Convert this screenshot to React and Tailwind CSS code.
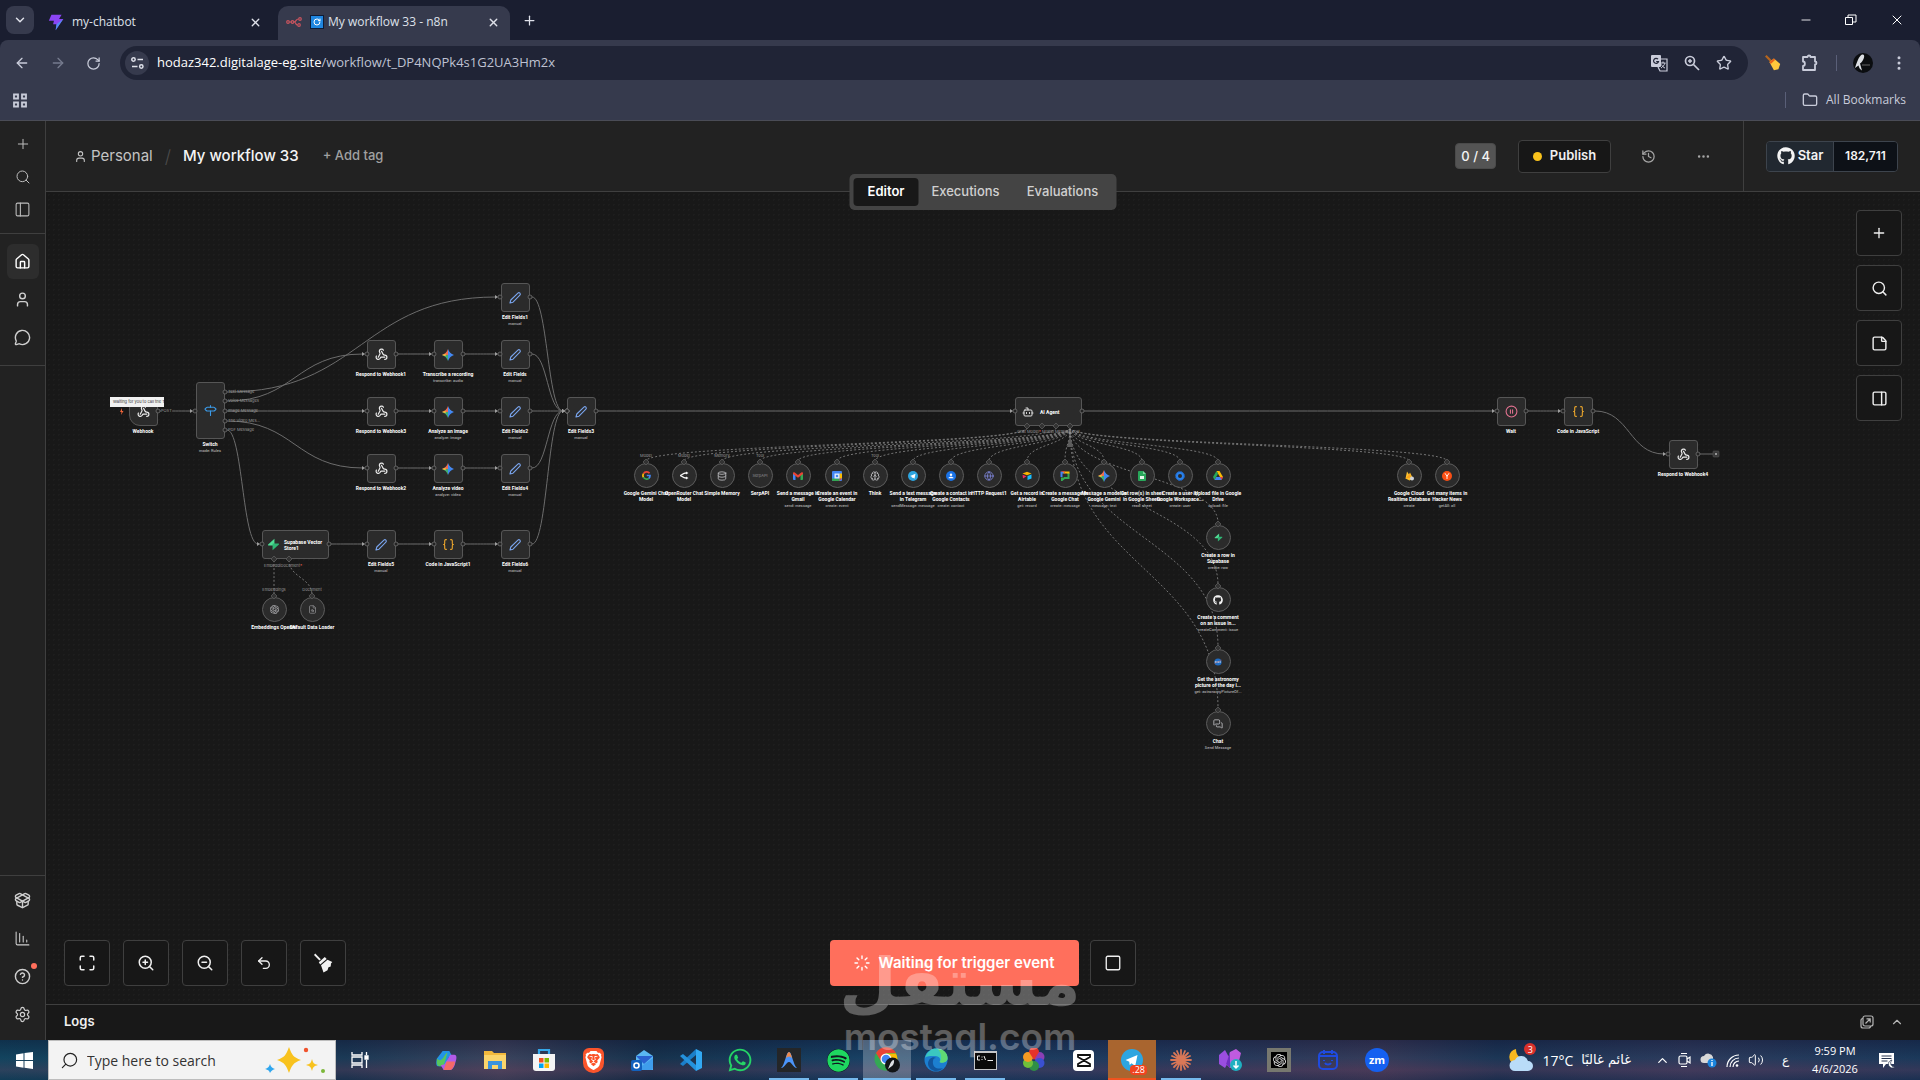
import React from 'react';
import {
  ArrowLeft, ArrowRight, RotateCw, ChevronDown, ChevronUp, X, Plus, Minus, Search, PanelLeft, PanelRight, House, User,
  MessageCircle, PackageOpen, Settings, Maximize, ZoomIn, ZoomOut, Undo2, History, Ellipsis,
  StickyNote, Square, Webhook, Signpost, Braces, CirclePause, Bot, Globe, Star, Folder, EllipsisVertical,
  ChartColumnDecreasing, CircleQuestionMark, Volume2, FileSearch, Brain, MessagesSquare, Database,
} from 'lucide-react';
import { FaSpotify, FaWhatsapp, FaGithub } from 'react-icons/fa';
import { SiBrave, SiOpenai } from 'react-icons/si';

/* ---------- drawn icons ---------- */

const PenIcon = () => (
  <svg width="14" height="14" viewBox="0 0 14 14" fill="none" stroke="#7aa5ee" strokeWidth="1.100" strokeLinejoin="round">
    <path d="M2 12l.8-3L9.900 2.100a1.300 1.300 0 0 1 2 2L5 11.200z" />
  </svg>
);

const GeminiIcon = () => (
  <svg width="14" height="14" viewBox="0 0 14 14">
    <path d="M7 1Q8.500 5.500 13 7H7z" fill="#4a8bf5" />
    <path d="M13 7Q8.500 8.500 7 13V7z" fill="#3f86f0" />
    <path d="M7 13Q5.500 8.500 1 7h6z" fill="#3fae74" />
    <path d="M1 7Q5.500 5.500 7 1v6z" fill="#ee6c50" />
    <path d="M1 7l3.200-1.200L5 7l-.8 1.200z" fill="#f5b93a" />
    <path d="M7 3.500L9.800 7 7 10z" fill="#3d8af0" />
  </svg>
);

const SupabaseIcon = ({ size = 14 }) => (
  <svg width={size} height={size} viewBox="0 0 14 14">
    <path d="M8 .8v7.400H1.800c-.7 0-1-.7-.6-1.200z" fill="#4fdc94" />
    <path d="M6 13.200V5.800h6.200c.7 0 1 .7.6 1.200z" fill="#2fb574" />
  </svg>
);

const GoogleIcon = () => (
  <svg width="9" height="9" viewBox="0 0 18 18" fill="none" strokeWidth="3.400">
    <path d="M15 4.500A7.300 7.300 0 0 0 3 5.200" stroke="#ea4335" />
    <path d="M3 5.200a7.300 7.300 0 0 0 0 7.600" stroke="#fbbc05" />
    <path d="M3 12.800a7.300 7.300 0 0 0 10.600 1.800" stroke="#34a853" />
    <path d="M13.600 14.600A7 7 0 0 0 16 9H9.500" stroke="#4285f4" />
  </svg>
);

const OpenRouterIcon = () => (
  <svg width="9" height="9" viewBox="0 0 18 18" fill="none" stroke="#f4f4f4" strokeWidth="2.800">
    <path d="M0 9c4 0 5-5 12-5M0 9c4 0 5 5 12 5" />
    <path d="M12 1l5 3-5 3zM12 11l5 3-5 3z" fill="#f4f4f4" stroke="none" />
  </svg>
);

const GmailIcon = () => (
  <svg width="10" height="8" viewBox="0 0 20 16">
    <path d="M0 2v12c0 1 1 2 2 2h3V6z" fill="#4285f4" />
    <path d="M20 2v12c0 1-1 2-2 2h-3V6z" fill="#34a853" />
    <path d="M0 2.500C0 .5 2 0 3.500 1L10 6l6.500-5C18 0 20 .5 20 2.500V4l-10 7.500L0 4z" fill="#ea4335" />
  </svg>
);

const CalendarIcon = () => (
  <svg width="10" height="10" viewBox="0 0 20 20">
    <rect width="20" height="20" rx="2" fill="#4285f4" />
    <path d="M15 5h5v10h-5z" fill="#fbbc04" />
    <path d="M0 15h15v5H2a2 2 0 0 1-2-2z" fill="#34a853" />
    <path d="M15 15h5l-5 5z" fill="#ea4335" />
    <path d="M5 5h10v10H5z" fill="#dceafd" />
    <circle cx="10" cy="10" r="2.500" fill="#4285f4" />
  </svg>
);

const TelegramDot = ({ size = 10 }) => (
  <svg width={size} height={size} viewBox="0 0 24 24">
    <circle cx="12" cy="12" r="12" fill="#2da5e0" />
    <path d="M5 12l13-5.500-2.500 12-4-3-2 2-.500-3.500z" fill="#fff" />
  </svg>
);

const ContactsIcon = () => (
  <svg width="10" height="10" viewBox="0 0 20 20">
    <circle cx="10" cy="10" r="10" fill="#1a73e8" />
    <circle cx="10" cy="7.500" r="2.500" fill="#fff" />
    <path d="M5 14.500c0-4 10-4 10 0z" fill="#fff" />
  </svg>
);

const AirtableIcon = () => (
  <svg width="10" height="10" viewBox="0 0 20 20">
    <path d="M1 5l9-3.500L19 5l-9 3.500z" fill="#fcb400" />
    <path d="M11 10l8-3v8l-8 3z" fill="#18bfff" />
    <path d="M1 7.500l8 3L2 15z" fill="#f82b60" />
  </svg>
);

const GChatIcon = () => (
  <svg width="10" height="10" viewBox="0 0 20 20" fill="none" strokeWidth="4">
    <path d="M3 12V3h5" stroke="#4285f4" />
    <path d="M7 3h10v3" stroke="#fbbc04" />
    <path d="M17 5v9H9l-5 4v-5" stroke="#34a853" />
    <path d="M3 1h6v4" stroke="#ea4335" strokeWidth="1.500" />
  </svg>
);

const SheetsIcon = () => (
  <svg width="8" height="10" viewBox="0 0 16 20">
    <path d="M0 2C0 1 1 0 2 0h8l6 6v12c0 1-1 2-2 2H2c-1 0-2-1-2-2z" fill="#28a75a" />
    <path d="M4 10h8v6H4z" fill="#e7f6ec" />
    <path d="M10 0v6h6z" fill="#7ed3a0" />
  </svg>
);

const WorkspaceIcon = () => (
  <svg width="10" height="10" viewBox="0 0 20 20" fill="none">
    <circle cx="10" cy="10" r="6.500" stroke="#2b82ea" strokeWidth="5" />
    <circle cx="10" cy="10" r="8.500" stroke="#1a66d0" strokeWidth="2" strokeDasharray="4 2.700" />
  </svg>
);

const DriveIcon = () => (
  <svg width="10" height="9" viewBox="0 0 20 18">
    <path d="M7 0h6l7 12h-6z" fill="#fbbc04" />
    <path d="M7 0l3 5.500L3 18l-3-6z" fill="#28a75a" />
    <path d="M6.500 12H20l-3 6H3z" fill="#4285f4" />
    <path d="M14 12h6l-3 6z" fill="#ea4335" />
  </svg>
);

const FirebaseIcon = () => (
  <svg width="9" height="10" viewBox="0 0 18 20">
    <path d="M1 15L4 1l4 6 2-4 6 12-7 4z" fill="#fbc02d" />
    <path d="M1 15L10 5l2 8z" fill="#f9a01b" />
    <circle cx="14" cy="15" r="4" fill="#cfd3da" />
  </svg>
);

const HackerNewsIcon = () => (
  <svg width="10" height="10" viewBox="0 0 20 20">
    <circle cx="10" cy="10" r="10" fill="#fb4f14" />
    <path d="M6 4.500l4 6 4-6M10 10v6" stroke="#fff" strokeWidth="1.800" fill="none" />
  </svg>
);

const NasaIcon = () => (
  <svg width="8" height="8" viewBox="0 0 20 20">
    <circle cx="10" cy="10" r="9" fill="#1f6dc4" />
    <path d="M2 10h16" stroke="#fff" strokeWidth="2.500" strokeDasharray="3 1" />
    <path d="M1 14L19 5" stroke="#e05b4b" strokeWidth="1" />
  </svg>
);

const Broom = ({ size = 20 }) => (
  <svg width={size} height={size} viewBox="0 0 20 20" fill="#f2f2f2">
    <path d="M2.200.6l5.600 5.600-1.400 1.400L1 2z" />
    <path d="M5.800 9.200l6-5.200 1.900 1.900-6.500 5.500z" />
    <path d="M8 12.200l6.500-5.500 4.800 2.200-1.300 1.500-.3 3-2.200.8-1 3-4 2.300z" />
  </svg>
);

const N8nLogo = () => (
  <svg width="16" height="10" viewBox="0 0 32 20" fill="none" stroke="#c9545e" strokeWidth="2.400">
    <circle cx="4" cy="10" r="2.600" /><circle cx="13" cy="10" r="2.600" />
    <circle cx="28" cy="4" r="2.600" /><circle cx="26" cy="16" r="2.600" />
    <path d="M7 10h3M16 10c5 0 3-6 9-6M16 10c5 0 2 6 7 6" />
  </svg>
);

const PopOutIcon = () => (
  <svg width="14" height="14" viewBox="0 0 14 14" fill="none" stroke="#b5b5b5" strokeWidth="1.200">
    <rect x="3" y="1" width="10" height="10" rx="2" />
    <path d="M3 3.500c-1.500 0-2 1-2 2V11c0 1.200.8 2 2 2h5.500c1.200 0 2-.8 2-2" />
    <path d="M5.500 8.500L10 4M6.500 3.800h3.700v3.700" />
  </svg>
);

/* ---------- workflow data ---------- */

const VIEW = { x: -46, y: -192 };

const webhook = <Webhook size={13} color="#ececec" strokeWidth={2.200} />;
const braces = <Braces size={13} color="#f0a92c" strokeWidth={2} />;

const boxes = [
  { x: 515, y: 297, icon: <PenIcon />, title: 'Edit Fields1', sub: 'manual' },
  { x: 381, y: 354, icon: webhook, title: 'Respond to Webhook1' },
  { x: 448, y: 354, icon: <GeminiIcon />, title: 'Transcribe a recording', sub: 'transcribe: audio' },
  { x: 515, y: 354, icon: <PenIcon />, title: 'Edit Fields', sub: 'manual' },
  { x: 381, y: 411, icon: webhook, title: 'Respond to Webhook3' },
  { x: 448, y: 411, icon: <GeminiIcon />, title: 'Analyze an image', sub: 'analyze: image' },
  { x: 515, y: 411, icon: <PenIcon />, title: 'Edit Fields2', sub: 'manual' },
  { x: 581, y: 411, icon: <PenIcon />, title: 'Edit Fields3', sub: 'manual' },
  { x: 381, y: 468, icon: webhook, title: 'Respond to Webhook2' },
  { x: 448, y: 468, icon: <GeminiIcon />, title: 'Analyze video', sub: 'analyze: video' },
  { x: 515, y: 468, icon: <PenIcon />, title: 'Edit Fields4', sub: 'manual' },
  { x: 381, y: 544, icon: <PenIcon />, title: 'Edit Fields5', sub: 'manual' },
  { x: 448, y: 544, icon: braces, title: 'Code in JavaScript1' },
  { x: 515, y: 544, icon: <PenIcon />, title: 'Edit Fields6', sub: 'manual' },
  { x: 1511, y: 411, icon: <CirclePause size={13} color="#e0718f" strokeWidth={2} />, title: 'Wait' },
  { x: 1578, y: 411, icon: braces, title: 'Code in JavaScript' },
  { x: 1683, y: 454, icon: webhook, title: 'Respond to Webhook4' },
];

const grey = { color: '#c0c0c4', strokeWidth: 2 };

const circles = [
  { x: 646, icon: <GoogleIcon />, title: ['Google Gemini Chat', 'Model'], top: 'Model' },
  { x: 684, icon: <OpenRouterIcon />, title: ['OpenRouter Chat', 'Model'], top: 'Model' },
  { x: 722, icon: <Database size={10} {...grey} />, title: ['Simple Memory'], top: 'Memory' },
  { x: 760, icon: <span className="text-[4px] leading-none text-[#8d8d90]">SerpAPI</span>, title: ['SerpAPI'], top: 'Tool' },
  { x: 798, icon: <GmailIcon />, title: ['Send a message in', 'Gmail'], sub: 'send: message' },
  { x: 837, icon: <CalendarIcon />, title: ['Create an event in', 'Google Calendar'], sub: 'create: event' },
  { x: 875, icon: <Brain size={10} {...grey} />, title: ['Think'], top: 'Tool' },
  { x: 913, icon: <TelegramDot />, title: ['Send a text message', 'in Telegram'], sub: 'sendMessage: message' },
  { x: 951, icon: <ContactsIcon />, title: ['Create a contact in', 'Google Contacts'], sub: 'create: contact' },
  { x: 989, icon: <Globe size={10} color="#7e86d8" strokeWidth={2} />, title: ['HTTP Request1'] },
  { x: 1027, icon: <AirtableIcon />, title: ['Get a record in', 'Airtable'], sub: 'get: record' },
  { x: 1065, icon: <GChatIcon />, title: ['Create a message in', 'Google Chat'], sub: 'create: message' },
  { x: 1104, icon: <GeminiIcon />, title: ['Message a model in', 'Google Gemini'], sub: 'message: text' },
  { x: 1142, icon: <SheetsIcon />, title: ['Get row(s) in sheet', 'in Google Sheets'], sub: 'read: sheet' },
  { x: 1180, icon: <WorkspaceIcon />, title: ['Create a user in', 'Google Workspace...'], sub: 'create: user' },
  { x: 1218, icon: <DriveIcon />, title: ['Upload file in Google', 'Drive'], sub: 'upload: file' },
  { x: 1409, icon: <FirebaseIcon />, title: ['Google Cloud', 'Realtime Database'], sub: 'create' },
  { x: 1447, icon: <HackerNewsIcon />, title: ['Get many items in', 'Hacker News'], sub: 'getAll: all' },
].map((n) => ({ ...n, y: 475 })).concat([
  { x: 1218, y: 537, icon: <SupabaseIcon size={9} />, title: ['Create a row in', 'Supabase'], sub: 'create: row' },
  { x: 1218, y: 599, icon: <FaGithub size={10} color="#f4f4f4" />, title: ['Create a comment', 'on an issue in...'], sub: 'createComment: issue' },
  { x: 1218, y: 661, icon: <NasaIcon />, title: ['Get the astronomy', 'picture of the day i...'], sub: 'get: astronomyPictureOf...' },
  { x: 1218, y: 723, icon: <MessagesSquare size={10} {...grey} />, title: ['Chat'], sub: 'Send Message' },
  { x: 274, y: 609, icon: <SiOpenai size={9} color="#c0c0c4" />, title: ['Embeddings OpenAI'], top: 'Embeddings' },
  { x: 312, y: 609, icon: <FileSearch size={9} color="#8d8d90" />, title: ['Default Data Loader'], top: 'Document' },
]);

const mainEdges = [
  [158, 411, 195, 411],
  [225, 392, 500, 297], [225, 401, 367, 354], [225, 411, 367, 411], [225, 421, 367, 468], [225, 430, 262, 544],
  [396, 354, 434, 354], [463, 354, 500, 354], [396, 411, 434, 411], [463, 411, 500, 411],
  [396, 468, 434, 468], [463, 468, 500, 468], [329, 544, 367, 544], [396, 544, 434, 544], [463, 544, 500, 544],
  [530, 297, 567, 411], [530, 354, 567, 411], [530, 411, 567, 411], [530, 468, 567, 411], [530, 544, 567, 411],
  [596, 411, 1015, 411], [1082, 411, 1497, 411], [1526, 411, 1563, 411], [1593, 411, 1668, 454],
];

const agentPort = (i) => [1027, 1027, 1056][i] || 1070;
const subEdges = circles.slice(0, 22).map((n, i) => [agentPort(i), 428, n.x, n.y - 14])
  .concat([[274, 560, 274, 595], [289, 560, 312, 595]]);

const outLabels = [
  [392, 'Text Message'], [401, 'Voice Messages'], [411, 'Image Message'], [421, 'The Video Mes...'], [430, 'PDF Message'],
];

const hPath = ([a, b, c, d]) => {
  const s = a + 2;
  const e = c - 4;
  const m = (s + e) / 2;
  return `M${s} ${b}C${m} ${b} ${m} ${d} ${e} ${d}`;
};
const vPath = ([a, b, c, d]) => {
  const m = (b + d) / 2;
  return `M${a} ${b}C${a} ${m} ${c} ${m} ${c} ${d}`;
};

/* ---------- canvas ---------- */

function BoxNode({ n }) {
  return (
    <div className="absolute flex w-[120px] -translate-x-1/2 flex-col items-center" style={{ left: n.x, top: n.y - 14 }}>
      <div className="grid size-[29px] place-items-center rounded-[3px] border border-[#565656] bg-[#2b2b2b]">{n.icon}</div>
      <NodeText title={[n.title]} sub={n.sub} />
    </div>
  );
}

function NodeText({ title, sub }) {
  return (
    <div className="mt-0.5 text-center font-['Roboto',sans-serif] whitespace-nowrap">
      {title.map((t) => <p key={t} className="text-[5px] leading-[6px] font-bold text-white">{t}</p>)}
      {sub && <p className="text-[4px] leading-[7px] font-medium text-[#a8a8a8]">{sub}</p>}
    </div>
  );
}

function CircleNode({ n }) {
  return (
    <div className="absolute flex w-[80px] -translate-x-1/2 flex-col items-center" style={{ left: n.x, top: n.y - 12 }}>
      {n.top && <span className="absolute -top-[10px] text-[4px] leading-[5px] text-[#999]">{n.top}</span>}
      <div className="grid size-[25px] place-items-center rounded-full border border-[#5c5c5c] bg-[#2b2b2b]">{n.icon}</div>
      <NodeText title={n.title} sub={n.sub} />
    </div>
  );
}

const Diamond = ({ x, y }) => <path d={`M${x} ${y - 3}l3 3-3 3-3-3z`} fill="#333" stroke="#5c5c5c" strokeWidth=".8" />;

function Workflow() {
  return (
    <div className="absolute top-0 left-0" style={{ transform: `translate(${VIEW.x}px, ${VIEW.y}px)` }}>
      <svg className="absolute overflow-visible" width="1" height="1" fill="none" aria-hidden="true">
        {mainEdges.map((e) => <path key={e.join()} d={hPath(e)} stroke="#6c6c6c" strokeWidth="1" />)}
        {subEdges.map((e, i) => <path key={i} d={vPath(e)} stroke="#747474" strokeWidth="1" strokeDasharray="2 2" />)}
        <path d="M1070 436l3 11h-6z" fill="#5d5d5d" />
        <path d="M1070 425v12" stroke="#a0a0a0" />
        <path d="M1698 454h16" stroke="#686868" />
      </svg>
      {circles.map((n) => <CircleNode key={n.title[0]} n={n} />)}
      {boxes.map((n) => <BoxNode key={n.title} n={n} />)}

      <div className="absolute flex w-[60px] -translate-x-1/2 flex-col items-center" style={{ left: 143, top: 397 }}>
        <div className="grid size-[29px] place-items-center rounded-[3px] rounded-l-[11px] border border-[#565656] bg-[#2b2b2b]">{webhook}</div>
        <NodeText title={['Webhook']} />
      </div>
      <div className="absolute flex h-[10px] w-[54px] items-center overflow-hidden bg-[#f1f1f1] pl-[3px] text-[4px] leading-none whitespace-nowrap text-[#333]" style={{ left: 110, top: 397 }}>
        Waiting for you to call the Test URL
      </div>

      <div className="absolute flex w-[60px] -translate-x-1/2 flex-col items-center" style={{ left: 210, top: 382 }}>
        <div className="grid h-[57px] w-[29px] place-items-center rounded-[3px] border border-[#565656] bg-[#2b2b2b]">
          <Signpost size={13} color="#3b9ae8" />
        </div>
        <NodeText title={['Switch']} sub="mode: Rules" />
      </div>
      {outLabels.map(([y, t]) => (
        <span key={t} className="absolute text-[4px] leading-[4px] whitespace-nowrap text-[#999]" style={{ left: 228, top: y - 2 }}>{t}</span>
      ))}
      <span className="absolute bg-[#181818] text-[4px] leading-[4px] text-[#999]" style={{ left: 161, top: 409 }}>POST</span>

      <div className="absolute flex h-[29px] w-[67px] items-center gap-1 rounded-[3px] border border-[#565656] bg-[#2b2b2b] pl-1" style={{ left: 262, top: 530 }}>
        <SupabaseIcon size={13} />
        <p className="font-['Roboto',sans-serif] text-[5px] leading-[6px] font-bold text-white">Supabase Vector<br />Store1</p>
      </div>
      <span className="absolute text-[4px] leading-[5px] text-[#999]" style={{ left: 264, top: 563 }}>EmbeddiDocument<b className="text-[#e0604f]">*</b></span>

      <div className="absolute flex h-[29px] w-[67px] items-center gap-1.5 rounded-[3px] border border-[#565656] bg-[#2b2b2b] pl-1.5" style={{ left: 1015, top: 397 }}>
        <Bot size={12} color="#e4e4e4" />
        <p className="font-['Roboto',sans-serif] text-[5px] leading-[6px] font-bold text-white">AI Agent</p>
      </div>
      <span className="absolute text-[4px] leading-[5px] whitespace-nowrap text-[#999]" style={{ left: 1017, top: 429 }}>Chat Model<b className="text-[#e0604f]">*</b> Model Memory Tool</span>

      <svg className="absolute overflow-visible" width="1" height="1" aria-hidden="true">
        {mainEdges.map(([a, b, c, d]) => (
          <g key={[a, b, c, d].join()}>
            <circle cx={a} cy={b} r="2" fill="#222" stroke="#707070" strokeWidth=".8" />
            <circle cx={c} cy={d} r="2" fill="#222" stroke="#707070" strokeWidth=".8" />
            <path d={`M${c - 5} ${d - 2}l3 2-3 2z`} fill="#a0a0a0" />
          </g>
        ))}
        <circle cx="1698" cy="454" r="2" fill="#222" stroke="#707070" strokeWidth=".8" />
        <rect x="1713" y="451" width="6" height="6" rx="1" fill="#3a3a3a" stroke="#555" strokeWidth=".6" />
        <path d="M1715 454h2M1716 453v2" stroke="#ccc" strokeWidth=".8" />
        {[1027, 1042, 1056, 1070].map((x) => <Diamond key={x} x={x} y={426} />)}
        {[274, 289].map((x) => <Diamond key={x} x={x} y={559} />)}
        {circles.map((n) => <Diamond key={n.title[0]} x={n.x} y={n.y - 13} />)}
        <path d="M122 408l-2 4h1.500l-.5 3 2.500-4h-1.500z" fill="#f0653a" />
      </svg>
    </div>
  );
}

/* ---------- browser frame ---------- */

function TabStrip() {
  return (
    <div className="flex h-10 shrink-0 items-end bg-[#1a1e30] pl-1.5 text-[#dfe1ea]">
      <button aria-label="Search tabs" className="mb-1.5 grid h-7 w-7 place-items-center rounded-lg bg-[#363a4d]"><ChevronDown size={14} strokeWidth={2.500} /></button>
      <div className="flex h-[34px] w-[244px] items-center gap-[7px] pr-4 pl-[14px] pb-0.5 text-[12px]">
        <svg width="17" height="17" viewBox="0 0 20 20" aria-hidden="true">
          <path d="M4 1h12l-3 5h5L9 19l1-7H6l1-4H1z" fill="#8b45f5" />
          <path d="M18 6L9 19l1-7z" fill="#3fa9f5" opacity=".7" />
        </svg>
        <span className="flex-1">my-chatbot</span>
        <button aria-label="Close my-chatbot"><X size={13} strokeWidth={2.500} /></button>
      </div>
      <div className="flex h-[34px] w-[232px] items-center gap-2 rounded-t-[10px] bg-[#363a4d] pr-2.5 pb-0.5 pl-2 text-[12px]">
        <N8nLogo />
        <span className="flex flex-1 items-center gap-1 whitespace-nowrap">
          <span className="grid size-[14px] place-items-center border border-[#0e1c38] bg-[#1f86e0]"><RotateCw size={8} color="#fff" strokeWidth={3} /></span>
          My workflow 33 - n8n
        </span>
        <button aria-label="Close My workflow 33"><X size={13} strokeWidth={2.500} /></button>
      </div>
      <button aria-label="New tab" className="mb-3 ml-3"><Plus size={15} /></button>
      <div className="ml-auto flex h-10 items-center gap-8 pr-[15px] text-white">
        <button aria-label="Minimize"><Minus size={14} strokeWidth={1.500} /></button>
        <button aria-label="Restore" className="grid place-items-center">
          <svg width="12" height="12" viewBox="0 0 12 12" fill="none" stroke="#fff"><path d="M.5 3.500h7v7h-7zM3 3V1h8v7H8" /></svg>
        </button>
        <button aria-label="Close window"><X size={16} strokeWidth={1.500} /></button>
      </div>
    </div>
  );
}

function Toolbar() {
  return (
    <div className="shrink-0 bg-[#1a1e30]">
      <div className="flex h-[81px] flex-col rounded-t-lg border-b border-[#4a4c56] bg-[#363a4d] text-[#c9ccda]">
        <div className="flex items-center pt-1.5 pr-3">
          <div className="flex w-[120px] items-center gap-5 pl-[14px]">
            <button aria-label="Back"><ArrowLeft size={16} /></button>
            <button aria-label="Forward" className="text-[#767b8e]"><ArrowRight size={16} /></button>
            <button aria-label="Reload"><RotateCw size={15} /></button>
          </div>
          <div className="flex h-[34px] flex-1 items-center gap-2 rounded-full bg-[#202436] pr-4 pl-[5px]">
            <button aria-label="Site information" className="grid size-6 place-items-center rounded-full bg-[#363a4d]">
              <svg width="13" height="12" viewBox="0 0 13 12" fill="none" stroke="#dfe1ea" strokeWidth="1.500"><circle cx="2.500" cy="2.500" r="1.700" /><path d="M6.500 2.500H12M1 9.500h5.500" /><circle cx="10.300" cy="9.500" r="1.700" /></svg>
            </button>
            <span className="flex-1 text-[13px] text-[#bfc2d2]"><span className="text-white">hodaz342.digitalage-eg.site</span>/workflow/t_DP4NQPk4s1G2UA3Hm2x</span>
            <div className="flex items-center gap-4">
              <button aria-label="Translate this page">
                <svg width="17" height="17" viewBox="0 0 17 17"><rect width="10" height="12" rx="1" fill="#c9ccda" /><path d="M7 4h9v12H9l-2-4" fill="none" stroke="#c9ccda" strokeWidth="1.200" /><path d="M7 4.200A2.500 2.500 0 1 0 7.500 6.500H5.200" fill="none" stroke="#202436" strokeWidth="1.200" /><path d="M9.500 8h5M12 6.500V8M14 8c-.5 2-2.500 4-4 5M10.500 9.500c.5 1.500 2 3 3.500 3.500" stroke="#c9ccda" fill="none" /></svg>
              </button>
              <button aria-label="Zoom">
                <svg width="16" height="16" viewBox="0 0 16 16" fill="none" stroke="#c9ccda" strokeWidth="1.700"><circle cx="6" cy="6" r="4.500" /><path d="M9.500 9.500L15 15" /><path d="M6 4v4M4 6h4" strokeWidth="1.500" /></svg>
              </button>
              <button aria-label="Bookmark this tab"><Star size={16} /></button>
            </div>
          </div>
          <div className="flex items-center pl-4">
            <button aria-label="Cleaner extension">
              <svg width="18" height="18" viewBox="0 0 20 18"><path d="M2 1l6 6" stroke="#b5651d" strokeWidth="2.500" /><path d="M6 8l5-4 7 6-2 6-5 1z" fill="#ffc83d" /><path d="M6 8l5-4 1.500 1.500-5 4.500z" fill="#e8641b" /></svg>
            </button>
            <button aria-label="Extensions" className="ml-[19px]">
              <svg width="18" height="18" viewBox="0 0 18 18" fill="none" stroke="#c9ccda" strokeWidth="1.800" strokeLinejoin="round"><path d="M2 3h4.500c0-2 3-2 3 0H14v4.500c2 0 2 3 0 3V16H2v-4c2.500 0 2.500-4.500 0-4.500z" /></svg>
            </button>
            <span className="ml-[17px] h-4 w-px bg-[#5a5f78]" />
            <button aria-label="Profile" className="ml-4 grid size-5 place-items-center rounded-full bg-[#0b0d10]">
              <svg width="20" height="20" viewBox="0 0 20 20"><path d="M2 15C4 9 6 3 9 1.500c4-1 2 6-2 9l2 7c-2-1-3-3-3.500-5z" fill="#dcdfe4" /><path d="M9 12h8" stroke="#666" /></svg>
            </button>
            <button aria-label="Browser menu" className="ml-[17px]"><EllipsisVertical size={18} /></button>
          </div>
        </div>
        <div className="flex flex-1 items-center justify-between pr-[14px] pl-3">
          <button aria-label="Apps">
            <svg width="16" height="15" viewBox="0 0 16 15" fill="none" stroke="#c9ccda" strokeWidth="1.800"><path d="M2 1.500h4v4H2zM10 1.500h4v4h-4zM2 9.500h4v4H2zM10 9.500h4v4h-4z" /></svg>
          </button>
          <div className="flex items-center gap-4">
            <span className="h-4 w-px bg-[#5a5f78]" />
            <button className="flex items-center gap-2 text-[12px]"><Folder size={16} />All Bookmarks</button>
          </div>
        </div>
      </div>
    </div>
  );
}

/* ---------- application ---------- */

function SideButton({ label, children, active, dot }) {
  return (
    <button aria-label={label} className={active ? 'relative grid h-[35px] w-8 place-items-center rounded-md bg-[#2d2d2d] text-white' : 'relative grid h-[35px] w-8 place-items-center text-[#cfcfcf]'}>
      {children}
      {dot && <span className="absolute top-1 right-0.5 size-1.5 rounded-full bg-[#ff6f5c]" />}
    </button>
  );
}

function Sidebar() {
  return (
    <nav className="flex w-[46px] shrink-0 flex-col items-center border-r border-[#3f3f3f] bg-[#222]">
      <div className="flex w-full flex-col items-center border-b border-[#3f3f3f] pt-1.5 pb-[7px] text-[#bdbdbd]">
        <button aria-label="Create" className="grid h-[33px] place-items-center"><Plus size={16} strokeWidth={1.500} /></button>
        <button aria-label="Search" className="grid h-[33px] place-items-center"><Search size={16} strokeWidth={1.500} /></button>
        <button aria-label="Toggle sidebar" className="grid h-[33px] place-items-center"><PanelLeft size={17} strokeWidth={1.500} /></button>
      </div>
      <div className="flex w-full flex-col items-center gap-[3px] border-b border-[#3f3f3f] pt-2.5 pb-2.5">
        <SideButton label="Home" active><House size={17} /></SideButton>
        <SideButton label="Personal"><User size={17} /></SideButton>
        <SideButton label="Chat"><MessageCircle size={17} /></SideButton>
      </div>
      <div className="mt-auto flex w-full flex-col items-center gap-[3px] border-t border-[#3f3f3f] pt-[7px] pb-2">
        <SideButton label="Templates"><PackageOpen size={17} /></SideButton>
        <SideButton label="Insights"><ChartColumnDecreasing size={17} strokeWidth={1.500} /></SideButton>
        <SideButton label="Help" dot><CircleQuestionMark size={17} /></SideButton>
        <SideButton label="Settings"><Settings size={17} strokeWidth={1.700} /></SideButton>
      </div>
    </nav>
  );
}

function Header() {
  return (
    <header className="flex h-[71px] shrink-0 items-stretch border-b border-[#3f3f3f] bg-[#222]">
      <div className="flex flex-1 items-center pl-7">
        <a href="#personal" className="flex items-center gap-1 text-[15px] text-[#c4c4c4]"><User size={13} />Personal</a>
        <span className="mx-3 text-[18px] font-light text-[#4b4b4b]">/</span>
        <h1 className="text-[15px] font-medium text-[#f4f4f4]">My workflow 33</h1>
        <button className="ml-6 text-[13px] font-medium text-[#a0a0a0]">+ Add tag</button>
        <span className="ml-auto rounded-[4px] border border-[#4a4a4a] bg-[#545454] px-[5px] py-0.5 text-[13px] leading-5 font-medium text-[#f4f4f4]">0 / 4</span>
        <button className="ml-[22px] flex h-[33px] w-[93px] items-center justify-center gap-2 rounded-[4px] border border-[#3f3f3f] bg-[#171717] text-[13px] font-semibold text-[#f0f0f0]">
          <span className="size-[9px] rounded-full bg-[#f9c21c]" />Publish
        </button>
        <button aria-label="Workflow history" className="mr-10 ml-[30px] text-[#a6a6a6]"><History size={15} /></button>
        <button aria-label="More actions" className="mr-8 text-[#a6a6a6]"><Ellipsis size={15} /></button>
      </div>
      <div className="flex items-center border-l border-[#3f3f3f] pr-[22px] pl-[22px]">
        <div className="flex h-[31px] items-stretch overflow-hidden rounded-[4px] border border-[#3d444d] text-[12px] font-semibold text-[#f4f4f4]">
          <a href="#star" className="flex w-[66px] items-center justify-center gap-[3px] bg-[#212830] text-[13px]"><FaGithub size={18} />Star</a>
          <a href="#stargazers" className="flex w-16 items-center justify-center border-l border-[#3d444d] bg-[#0d1117]">182,711</a>
        </div>
      </div>
    </header>
  );
}

function ToolButton({ label, children }) {
  return <button aria-label={label} className="grid size-[46px] place-items-center rounded-[4px] border border-[#3f3f3f] bg-[#171717] text-[#efefef]">{children}</button>;
}

function Canvas() {
  return (
    <section className="relative min-h-0 flex-1 bg-[#181818] bg-[radial-gradient(#1d1d1d_1px,transparent_1px)] bg-[size:5px_5px]">
      <div className="absolute inset-0 overflow-hidden"><Workflow /></div>
      <div role="tablist" className="absolute -top-[18px] left-1/2 flex h-9 -translate-x-1/2 items-center rounded-[5px] bg-[#444] p-1 text-[13px] font-medium text-[#d0d0d0]">
        <button role="tab" aria-selected="true" className="h-7 w-[65px] rounded-[4px] bg-[#181818] font-semibold text-white">Editor</button>
        <button role="tab" aria-selected="false" className="h-7 w-[94px]">Executions</button>
        <button role="tab" aria-selected="false" className="h-7 w-[100px]">Evaluations</button>
      </div>
      <div className="absolute top-[18px] right-[18px] flex flex-col gap-[9px]">
        <ToolButton label="Add node"><Plus size={16} /></ToolButton>
        <ToolButton label="Search nodes"><Search size={17} /></ToolButton>
        <ToolButton label="Add sticky note"><StickyNote size={17} /></ToolButton>
        <ToolButton label="Toggle panel"><PanelRight size={17} /></ToolButton>
      </div>
      <div className="absolute bottom-[18px] left-[18px] flex gap-[13px]">
        <ToolButton label="Fit to view"><Maximize size={18} /></ToolButton>
        <ToolButton label="Zoom in"><ZoomIn size={18} /></ToolButton>
        <ToolButton label="Zoom out"><ZoomOut size={18} /></ToolButton>
        <ToolButton label="Reset zoom"><Undo2 size={16} /></ToolButton>
        <ToolButton label="Tidy up"><Broom /></ToolButton>
      </div>
      <div className="absolute bottom-[18px] left-1/2 flex -translate-x-1/2 gap-[11px]">
        <button className="flex h-[46px] w-[249px] items-center justify-center gap-2 rounded-[4px] bg-[#ff6f5c] text-[15px] font-semibold whitespace-nowrap text-white">
          <svg width="16" height="16" viewBox="0 0 16 16" stroke="#fff" strokeWidth="1.400" strokeLinecap="round" aria-hidden="true"><path d="M8 1v2.500M8 12.500V15M1 8h2.500M12.500 8H15M3 3l1.800 1.800M11.200 11.200L13 13M3 13l1.800-1.800M11.200 4.800L13 3" /></svg>
          Waiting for trigger event
        </button>
        <ToolButton label="Stop"><Square size={18} strokeWidth={1.800} /></ToolButton>
      </div>
    </section>
  );
}

/* ---------- taskbar ---------- */

const apps = [
  ['Copilot', (
    <svg width="23" height="23" viewBox="0 0 24 24"><path d="M8 2h7l3 6-4 1-3 9H3c-2 0-2-4-1-8z" fill="#2293e6" /><path d="M2 10c0 4-1 8 3 8h4l4-14c-3 0-5 12-11 6z" fill="#57c65d" /><path d="M16 6h4c4 0 2 6 1 9-1 4-3 7-6 7H9l-3-5 4-1z" fill="#b25be8" /><path d="M9 22l3-9h9c-1 5-3 9-6 9z" fill="#f46a68" /></svg>
  )],
  ['File Explorer', (
    <svg width="22" height="20" viewBox="0 0 22 20"><path d="M0 1h8l2 2h12v16H0z" fill="#f3b93c" /><path d="M0 5h22v14H0z" fill="#fbd56b" /><path d="M4 19v-8h14v8h-4v-4H8v4z" fill="#3a93dd" /></svg>
  )],
  ['Microsoft Store', (
    <svg width="24" height="24" viewBox="0 0 24 24"><path d="M7 6V2h10v4" fill="none" stroke="#35a7e8" strokeWidth="2.200" /><path d="M1 6h22v14a3 3 0 0 1-3 3H4a3 3 0 0 1-3-3z" fill="#f4f4f4" /><path d="M7 10h4.500v4.500H7z" fill="#f25022" /><path d="M12.500 10H17v4.500h-4.500z" fill="#7fba00" /><path d="M7 15.500h4.500V20H7z" fill="#00a4ef" /><path d="M12.500 15.500H17V20h-4.500z" fill="#ffb900" /></svg>
  )],
  ['Brave', <span className="grid h-[25px] w-[21px] place-items-center rounded-t-[6px] rounded-b-[10px] bg-[#fb542b]"><SiBrave size={19} color="#fff" /></span>],
  ['Outlook', (
    <svg width="23" height="23" viewBox="0 0 23 23"><path d="M5 7l8-6 9 6v14H5z" fill="#5ab7f2" /><path d="M5 7h17l-9 8z" fill="#2a62d0" /><path d="M5 21l17-12v10c0 1-1 2-2 2z" fill="#3f9dec" /><rect y="11" width="11" height="11" rx="2" fill="#1361bd" /><circle cx="5.500" cy="16.500" r="2.500" fill="none" stroke="#fff" strokeWidth="1.600" /></svg>
  )],
  ['Visual Studio Code', (
    <svg width="24" height="24" viewBox="0 0 24 24"><path d="M17 1l6 3v16l-6 3z" fill="#32a9f3" /><path d="M17 1v6L4 18l-3-2z" fill="#1b7fc9" /><path d="M17 23v-6L4 6 1 8z" fill="#2492dc" /></svg>
  )],
  ['WhatsApp', <FaWhatsapp size={26} color="#25d366" />],
  ['Antigravity', (
    <svg width="24" height="24" viewBox="0 0 24 24"><path d="M0 0h24v24H0z" fill="#242628" /><path d="M4 20C8 17 9 4 12 4s4 13 8 16c-4 0-5-6-8-6s-4 6-8 6z" fill="#4b94f8" /><path d="M9 10c1-4 2-6 3-6s2 2 3 6c-2-2-4-2-6 0z" fill="#f08a4b" /></svg>
  ), 'line'],
  ['Spotify', <FaSpotify size={23} color="#1ed760" className="rounded-full bg-[#101820]" />, 'line'],
  ['Google Chrome', (
    <svg width="26" height="26" viewBox="0 0 26 26"><circle cx="12" cy="12" r="11.500" fill="#34a853" /><path d="M2 6a11.500 11.500 0 0 1 20 0z" fill="#ea4335" /><path d="M2 6l5.500 9L12 6z" fill="#ea4335" /><path d="M12 6.500h10a11.500 11.500 0 0 1-9 17z" fill="#fbbc04" /><circle cx="12" cy="12" r="5.500" fill="#fff" /><circle cx="12" cy="12" r="4.300" fill="#4285f4" /><circle cx="18.500" cy="18" r="7.500" fill="#121417" /><path d="M14 22c2-5 3-8 5-9s1 5-1 6z" fill="#dcdfe4" /></svg>
  ), 'active'],
  ['Microsoft Edge', (
    <svg width="24" height="24" viewBox="0 0 24 24"><circle cx="12" cy="12" r="11.500" fill="#1c7fd0" /><path d="M1 10C3 3 8 .5 12 .5c7 0 12 5 11.500 10 0 4-6 5-8 3.500 2-2 0-6-4-6-5 0-9 0-10.500 2z" fill="#3bc7c0" /><path d="M14 1c6 0 10 5 9.500 9.500 0 4-6 5-8 3.500C18 12 18 6 14 1z" fill="#5fd974" /><path d="M9 13c-1 6 4 9 10 7-4 5-14 4-15-4 0-5 5-8 8-6-2 0-3 1-3 3z" fill="#12559c" /></svg>
  ), 'line'],
  ['Command Prompt', (
    <svg width="23" height="19" viewBox="0 0 23 19"><path d="M0 0h23v19H0z" fill="#c4c6c8" /><path d="M1 2h21v16H1z" fill="#0a0a0a" /><path d="M6 5H3.500v4H6M8 5.500v1M8 8v1M10 5l1.500 4M13.500 9.500H19" stroke="#eee" fill="none" /></svg>
  ), 'line'],
  ['Color wheel', (
    <svg width="24" height="24" viewBox="0 0 24 24"><circle cx="12" cy="6" r="5" fill="#e5332a" /><circle cx="17.500" cy="9" r="5" fill="#8a3fb5" /><circle cx="17.500" cy="15" r="5" fill="#3a50d0" /><circle cx="12" cy="18" r="5" fill="#2f8f46" /><circle cx="6" cy="15" r="5" fill="#6fbf3a" /><circle cx="6" cy="9" r="5" fill="#f59a23" /><path d="M12 12L7 4a5 5 0 0 1 10 0z" fill="#e5332a" /></svg>
  )],
  ['CapCut', (
    <svg width="21" height="21" viewBox="0 0 21 21"><rect width="21" height="21" rx="4" fill="#fff" /><path d="M17 7V5H5v2l12 7v2H5v-2l12-7z" fill="none" stroke="#111" strokeWidth="1.800" /></svg>
  )],
  ['Telegram', (
    <span className="relative"><TelegramDot size={22} /><span className="absolute -right-1 -bottom-1 rounded-sm bg-[#f0431f] px-0.5 text-[9px] leading-[10px] text-white">.28</span></span>
  ), 'alert'],
  ['Claude', (
    <svg width="22" height="22" viewBox="0 0 22 22" stroke="#d97757" strokeWidth="1.800" strokeLinecap="round"><path d="M11 1v20M1 11h20M4 4l14 14M18 4L4 18M7 2l8 18M15 2L7 20M2 7l18 8M2 15l18-8" /></svg>
  ), 'line'],
  ['Clipchamp', (
    <svg width="24" height="24" viewBox="0 0 24 24"><path d="M1 7l6-5 5 9-5 9-6-4z" fill="#9a4ee0" /><path d="M12 4l6-3 5 4-3 12-8 3-4-4z" fill="#c05be0" /><path d="M12 4l-4 12 4 4z" fill="#6d2fc0" /><circle cx="18" cy="17" r="6" fill="#1fb0c0" /><path d="M18 13v7M15.500 17.500L18 20l2.500-2.500" stroke="#fff" strokeWidth="1.500" fill="none" /></svg>
  )],
  ['ChatGPT', <span className="grid size-6 place-items-center border-[4px] border-[#77786f] bg-black"><SiOpenai size={13} color="#e4e4e4" /></span>],
  ['Calendar bot', (
    <svg width="22" height="22" viewBox="0 0 22 22" fill="none" stroke="#1f4be0" strokeWidth="2"><rect x="2" y="3" width="18" height="17" rx="4" /><path d="M7 1v4M15 1v4M2 7h18M7 11v1M15 11v1M8 14c1 2 5 2 6 0" /></svg>
  )],
  ['Zoom', <span className="grid size-6 place-items-center rounded-full bg-[#1560f0] text-[11px] font-bold text-white">zm</span>],
];

function Taskbar() {
  return (
    <footer dir="ltr" className="flex h-10 shrink-0 items-stretch bg-[linear-gradient(180deg,rgba(10,20,50,.35),rgba(20,90,120,.15)_45%,rgba(120,70,100,.25)_75%,rgba(10,20,50,.1)),linear-gradient(90deg,#12405a,#1c3450_18%,#413f58_26%,#172c46_34%,#183c60_45%,#223458_60%,#3b3654_72%,#1d3050_78%,#303658_88%,#1c3355)] font-['Open_Sans','Noto_Sans',sans-serif] text-white">
      <button aria-label="Start" className="grid w-12 place-items-center">
        <svg width="17" height="17" viewBox="0 0 17 17" fill="#fff"><path d="M0 2.500L7.500 1.300V8H0zM8.500 1.100L17 0v8H8.500zM0 9h7.500v6.700L0 14.500zM8.500 9H17v8l-8.500-1.200z" /></svg>
      </button>
      <label className="flex w-72 items-center border border-[#bdbdbd] bg-[#f3f3f3] pr-2 pl-[11px]">
        <Search size={19} strokeWidth={1.500} color="#222" className="-scale-x-100" />
        <input type="search" aria-label="Type here to search" placeholder="Type here to search" className="ml-2 min-w-0 flex-1 bg-transparent text-[14px] text-black outline-none placeholder:text-[#333]" />
        <svg width="62" height="26" viewBox="0 0 62 26" aria-hidden="true">
          <path d="M24 0c3 8 4 10 12 13-8 3-9 5-12 13-3-8-4-10-12-13 8-3 9-5 12-13z" fill="#f8c21e" />
          <path d="M47 12c1 4 2 5 6 6-4 1-5 2-6 6-1-4-2-5-6-6 4-1 5-2 6-6z" fill="#f8c21e" />
          <path d="M5 17c1 3 2 4 5 5-3 1-4 2-5 4-1-3-2-3-5-4 3-1 4-2 5-5z" fill="#2fa6ee" />
          <circle cx="41" cy="3" r="2.200" fill="#f0532d" /><circle cx="58" cy="24" r="2" fill="#7db83a" />
        </svg>
      </label>
      <button aria-label="Task view" className="grid w-12 place-items-center">
        <svg width="18" height="18" viewBox="0 0 18 18" fill="none" stroke="#fff" strokeWidth="1.300"><path d="M1 1v3h10V1M1 6h10v6H1zM1 17v-3h10v3M15.500 1v3M15.500 9v8" /><path d="M14 5h3v3h-3z" fill="#fff" /></svg>
      </button>
      <ul className="ml-[38px] flex items-stretch gap-px">
        {apps.map(([name, icon, state]) => (
          <li key={name} className={state === 'active' ? 'flex w-12 bg-white/25' : state === 'alert' ? 'flex w-12 bg-[#a9652f]' : 'flex w-12'}>
            <button aria-label={name} className="relative grid flex-1 place-items-center">
              {icon}
              {state === 'line' && <span className="absolute inset-x-1 bottom-0 h-0.5 bg-[#76b9ed]" />}
              {state === 'active' && <span className="absolute inset-x-0 bottom-0 h-0.5 bg-[#76b9ed]" />}
              {state === 'alert' && <span className="absolute inset-x-0 bottom-0 h-0.5 bg-[#f0531f]" />}
            </button>
          </li>
        ))}
      </ul>
      <div className="ml-auto flex items-center">
        <button className="flex items-center gap-2 text-[14px] whitespace-nowrap">
          <span className="relative">
            <svg width="26" height="26" viewBox="0 0 26 26"><path d="M8 2c0 6 3 9 9 10a8 8 0 1 1-9-10z" fill="#f9b81f" /><path d="M7 24a5.500 5.500 0 0 1 0-11 7 7 0 0 1 13 1 5 5 0 0 1 0 10z" fill="#b9dcf8" /></svg>
            <span className="absolute -top-1 -right-0.5 grid size-3 place-items-center rounded-full bg-[#d8302a] text-[9px] leading-none">3</span>
          </span>
          17°C
          <span lang="ar" dir="rtl" className="font-['DejaVu_Sans',sans-serif] text-[13px]">غائم غالبًا</span>
        </button>
        <div className="ml-6 flex items-center gap-2">
          <button aria-label="Show hidden icons"><ChevronUp size={15} /></button>
          <svg width="14" height="16" viewBox="0 0 14 16" fill="none" stroke="#fff" strokeWidth="1.200"><rect x="1" y="4" width="8" height="8" rx="1.500" /><path d="M9 7l3-2v6l-3-2M3 1.500h6M3 14.500h6" /></svg>
          <svg width="17" height="16" viewBox="0 0 17 16"><path d="M4 11a3.500 3.500 0 0 1 0-7 5 5 0 0 1 9 1v6z" fill="#d8d8d8" /><circle cx="12" cy="11" r="4.500" fill="#1b84dd" /><path d="M12 10v4M12 8v1" stroke="#fff" strokeWidth="1.300" /></svg>
          <svg width="15" height="15" viewBox="0 0 15 15" fill="none" stroke="#fff" strokeWidth="1.200"><path d="M2 14A12 12 0 0 1 14 2M5 14a9 9 0 0 1 9-9M8 14a6 6 0 0 1 6-6" /><circle cx="12" cy="12.500" r="1.300" fill="#fff" stroke="none" /></svg>
          <Volume2 size={16} strokeWidth={1.500} />
        </div>
        <span lang="ar" className="ml-[18px] w-3 font-['DejaVu_Sans',sans-serif] text-[12px]">ع</span>
        <div className="ml-3 w-[58px] text-center text-[11px] leading-[18px] whitespace-nowrap"><p>9:59 PM</p><p>4/6/2026</p></div>
        <button aria-label="Notifications" className="mr-6 ml-3.5">
          <svg width="18" height="17" viewBox="0 0 18 17"><path d="M1 1h15v11H8l-3 4v-4H1z" fill="#fff" /><path d="M3.500 4h10M3.500 6.500h10M3.500 9h6" stroke="#26344f" /><path d="M14 8a4 4 0 1 0 3 7 4 4 0 0 1-3-7z" fill="#fff" stroke="#26344f" strokeWidth=".7" /></svg>
        </button>
      </div>
    </footer>
  );
}

function Watermark() {
  return (
    <div className="pointer-events-none absolute bottom-[24px] left-1/2 flex -translate-x-1/2 flex-col items-center text-center whitespace-nowrap text-white opacity-30">
      <p lang="ar" dir="rtl" className="font-['DejaVu_Sans',sans-serif] text-[66px] leading-[70px] font-bold">مستقل</p>
      <p className="text-[37px] leading-[38px] font-semibold">mostaql.com</p>
    </div>
  );
}

export default function App() {
  return (
    <div className="relative flex h-screen flex-col overflow-hidden bg-[#181818] font-['Inter',sans-serif]">
      <div className="shrink-0 font-['Open_Sans','Noto_Sans',sans-serif]">
        <TabStrip />
        <Toolbar />
      </div>
      <div className="flex min-h-0 flex-1">
        <Sidebar />
        <main className="flex min-w-0 flex-1 flex-col">
          <Header />
          <Canvas />
          <div className="flex h-9 shrink-0 items-center justify-between border-t border-[#3f3f3f] bg-[#181818] pr-4 pb-0.5 pl-[18px] text-[#f0f0f0]">
            <h2 className="text-[13px] font-semibold">Logs</h2>
            <div className="flex gap-4 text-[#b5b5b5]">
              <button aria-label="Pop out logs"><PopOutIcon /></button>
              <button aria-label="Open logs"><ChevronUp size={14} /></button>
            </div>
          </div>
        </main>
      </div>
      <Taskbar />
      <Watermark />
    </div>
  );
}
